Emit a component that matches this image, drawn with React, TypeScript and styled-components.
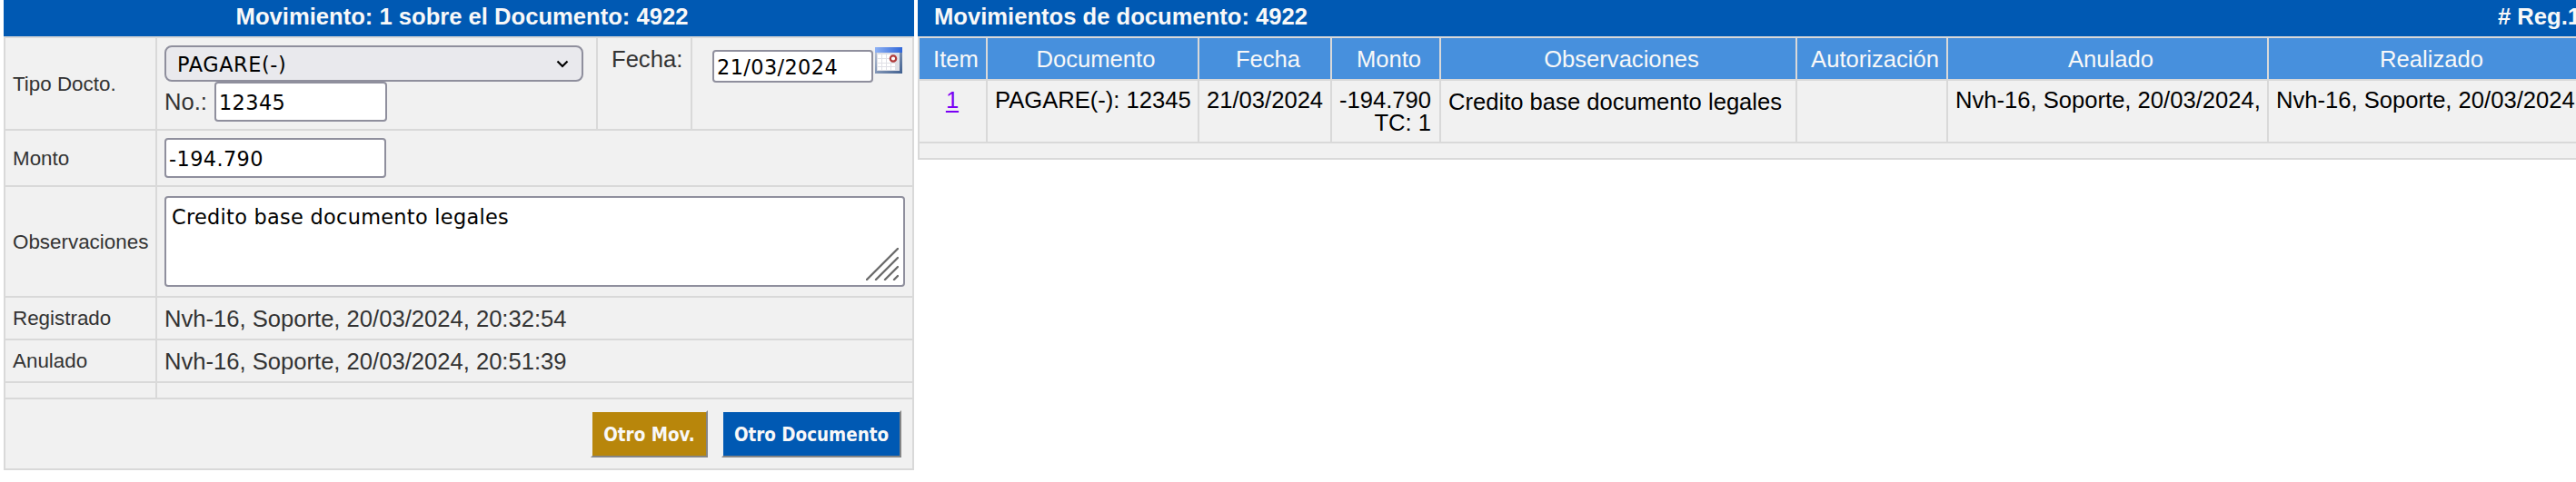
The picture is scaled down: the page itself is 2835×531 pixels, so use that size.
import styled, { createGlobalStyle } from "styled-components";

const Global = createGlobalStyle`
  html, body {
    margin: 0;
    padding: 0;
    background: white;
    overflow: hidden;
  }
  * {
    box-sizing: border-box;
  }
`;
const Page = styled.div`
  width: 100vw;
  height: 100vh;
  overflow: hidden;
  display: flex;
  align-items: flex-start;
  gap: 4px;
  padding-left: 4px;
  font-family: "Liberation Sans", Arial, sans-serif;
  font-size: 25.6px;
  line-height: 29px;
  white-space: nowrap;
`;
const Panel = styled.div<{ $width: number }>`
  flex: none;
  width: ${(p) => p.$width}px;
`;
const Title = styled.div<{ $split?: boolean }>`
  height: 40px;
  padding: 4px 10px 0 ${(p) => (p.$split ? "18px" : "17px")};
  display: flex;
  justify-content: ${(p) => (p.$split ? "space-between" : "center")};
  background: #0059b3;
  color: #f8f8f8;
  font-weight: bold;
`;
const Grid = styled.div`
  display: flex;
  flex-direction: column;
  gap: 2px;
  padding: 2px;
  background: #d9d9d9;
`;
const Row = styled.div<{ $cols: string; $height: number }>`
  display: grid;
  grid-template-columns: ${(p) => p.$cols};
  gap: 2px;
  height: ${(p) => p.$height}px;
`;
const Cell = styled.div`
  background: #f1f1f1;
  color: #333333;
  padding: 8px;
  min-width: 0;
`;
const Label = styled(Cell)`
  display: flex;
  align-items: center;
  font-size: 22.4px;
`;
const Value = styled(Cell)`
  display: flex;
  align-items: center;
  padding: 9px 8px 7px;
`;
const CaptionCell = styled(Cell)`
  padding: 9px 0 0 15px;
`;
const DateCell = styled(Cell)`
  display: flex;
  align-items: flex-start;
  gap: 2px;
  padding: 10px 0 0 22px;
`;
const Actions = styled(Cell)`
  display: flex;
  justify-content: flex-end;
  align-items: flex-start;
  gap: 15px;
  padding: 12px 12px 0 0;
`;
const NumberLine = styled.div`
  display: flex;
  align-items: center;
  gap: 8px;
`;
const Select = styled.div`
  width: 461px;
  height: 40px;
  padding: 2px 14px 0 12px;
  display: flex;
  align-items: center;
  justify-content: space-between;
  border: 2px solid #8f8f9d;
  border-radius: 8px;
  background: #e9e9ed;
  color: black;
  font-family: "DejaVu Sans", Verdana, sans-serif;
  font-size: 22.4px;
  letter-spacing: 0.6px;
`;
const Input = styled.input<{ $width: number; $height?: number }>`
  width: ${(p) => p.$width}px;
  height: ${(p) => p.$height ?? 44}px;
  padding: 3px 3px 1px;
  border: 2px solid #8f8f9d;
  border-radius: 4px;
  outline: none;
  background: white;
  color: black;
  font-family: "DejaVu Sans", Verdana, sans-serif;
  font-size: 22.4px;
  letter-spacing: 0.4px;
`;
const DateInput = styled(Input)`
  margin-top: 3px;
`;
const NoteBox = styled.div`
  width: 815px;
  height: 100px;
  margin-top: 2px;
  padding: 7px 5px 5px 6px;
  display: flex;
  justify-content: space-between;
  border: 2px solid #8f8f9d;
  border-radius: 4px;
  background: white;
  color: black;
  font-family: "DejaVu Sans", Verdana, sans-serif;
  font-size: 22.4px;
  letter-spacing: 0.3px;
`;
const Grip = styled.svg`
  align-self: flex-end;
`;
const Button = styled.button<{ $color: string; $width: number }>`
  width: ${(p) => p.$width}px;
  height: 52px;
  padding: 1px 0 0;
  border: 2px solid;
  border-color: #f1f1f1 #858585 #858585 #f1f1f1;
  background: ${(p) => p.$color};
  background-clip: padding-box;
  color: #f8f8f8;
  font-family: "DejaVu Sans Condensed", "DejaVu Sans", Verdana, sans-serif;
  font-size: 20.4px;
  font-stretch: condensed;
  font-weight: bold;
`;
const HeadCell = styled.div`
  padding: 9px 0 0 7px;
  background: #4790dd;
  color: #f8f8f8;
  text-align: center;
`;
const DataCell = styled.div<{ $align?: string; $top?: number }>`
  padding: ${(p) => p.$top ?? 9}px 9px 0 8px;
  background: #f1f1f1;
  color: black;
  line-height: 25px;
  text-align: ${(p) => p.$align ?? "left"};
`;
const ItemLink = styled.a`
  color: #7a00f5;
  text-decoration: underline;
  text-decoration-thickness: 2px;
  text-underline-offset: 3px;
`;

function CalendarIcon() {
  return (
    <svg width="30" height="29" viewBox="0 0 30 29">
      <defs>
        <linearGradient id="calTop" x1="0" x2="1">
          <stop offset="0" stopColor="#8fb2f4" />
          <stop offset="1" stopColor="#2f66d8" />
        </linearGradient>
        <linearGradient id="calBody" x1="0" x2="1" y1="0" y2="1">
          <stop offset="0" stopColor="#c3cbdb" />
          <stop offset="1" stopColor="#3f5f8f" />
        </linearGradient>
      </defs>
      <rect width="30" height="29" fill="url(#calBody)" />
      <rect x="2" y="6" width="25" height="20" fill="#dfe0e6" />
      <path d="M3 8h4v4H3zM8 8h4v4H8zM13 8h4v4h-4zM3 13h4v4H3zM8 13h4v4H8zM13 13h4v4h-4zM3 18h4v3H3zM8 18h4v3H8zM13 18h4v3h-4zM18 18h4v3h-4zM3 22h4v3H3zM8 22h4v3H8zM13 22h4v3h-4zM18 22h4v3h-4z" fill="#fff" />
      <rect width="30" height="6" fill="url(#calTop)" />
      <circle cx="20" cy="12.5" r="3.2" fill="#fff" stroke="#b03a3a" strokeWidth="2.2" />
    </svg>
  );
}

const formCols = "165px 483px 102px 242px";
const wideCols = "165px 831px";
const listCols = "73px 231px 144px 118px 390px 164px 351px 351px";
const heads = ["Item", "Documento", "Fecha", "Monto", "Observaciones", "Autorización", "Anulado", "Realizado"];

function MovementForm() {
  return (
    <Panel $width={1002}>
      <Title>Movimiento: 1 sobre el Documento: 4922</Title>
      <Grid>
        <Row $cols={formCols} $height={100}>
          <Label>Tipo Docto.</Label>
          <Cell>
            <Select>
              PAGARE(-)
              <svg width="14" height="10" viewBox="0 0 14 10">
                <path d="M1.5 1.5L7 7l5.500-5.500" fill="none" stroke="black" strokeWidth="2.200" />
              </svg>
            </Select>
            <NumberLine>
              No.:
              <Input $width={190} defaultValue="12345" />
            </NumberLine>
          </Cell>
          <CaptionCell>Fecha:</CaptionCell>
          <DateCell>
            <DateInput $width={177} $height={36} defaultValue="21/03/2024" />
            <CalendarIcon />
          </DateCell>
        </Row>
        <Row $cols={wideCols} $height={60}>
          <Label>Monto</Label>
          <Cell>
            <Input $width={244} defaultValue="-194.790" />
          </Cell>
        </Row>
        <Row $cols={wideCols} $height={120}>
          <Label>Observaciones</Label>
          <Cell>
            <NoteBox>
              Credito base documento legales
              <Grip width="36" height="36" viewBox="0 0 36 36">
                <path d="M1 35L35 1M11 35L35 11M21 35L35 21M31 35l4-4" stroke="#6b6b6b" strokeWidth="2.400" strokeLinecap="round" />
              </Grip>
            </NoteBox>
          </Cell>
        </Row>
        <Row $cols={wideCols} $height={45}>
          <Label>Registrado</Label>
          <Value>Nvh-16, Soporte, 20/03/2024, 20:32:54</Value>
        </Row>
        <Row $cols={wideCols} $height={45}>
          <Label>Anulado</Label>
          <Value>Nvh-16, Soporte, 20/03/2024, 20:51:39</Value>
        </Row>
        <Row $cols={wideCols} $height={16}>
          <Cell />
          <Cell />
        </Row>
        <Row $cols="998px" $height={76}>
          <Actions>
            <Button $color="#b8860b" $width={129}>Otro Mov.</Button>
            <Button $color="#0059b3" $width={198}>Otro Documento</Button>
          </Actions>
        </Row>
      </Grid>
    </Panel>
  );
}

function MovementList() {
  return (
    <Panel $width={1840}>
      <Title $split>
        <span>Movimientos de documento: 4922</span>
        <span># Reg.1</span>
      </Title>
      <Grid>
        <Row $cols={listCols} $height={45}>
          {heads.map((h) => (
            <HeadCell key={h}>{h}</HeadCell>
          ))}
        </Row>
        <Row $cols={listCols} $height={67}>
          <DataCell $align="center">
            <ItemLink>1</ItemLink>
          </DataCell>
          <DataCell>PAGARE(-): 12345</DataCell>
          <DataCell>21/03/2024</DataCell>
          <DataCell $align="right">
            -194.790
            <br />
            TC: 1
          </DataCell>
          <DataCell $top={11}>Credito base documento legales</DataCell>
          <DataCell />
          <DataCell>Nvh-16, Soporte, 20/03/2024,</DataCell>
          <DataCell>Nvh-16, Soporte, 20/03/2024,</DataCell>
        </Row>
        <Row $cols="1836px" $height={16}>
          <Cell />
        </Row>
      </Grid>
    </Panel>
  );
}

export default function App() {
  return (
    <>
      <Global />
      <Page>
        <MovementForm />
        <MovementList />
      </Page>
    </>
  );
}
